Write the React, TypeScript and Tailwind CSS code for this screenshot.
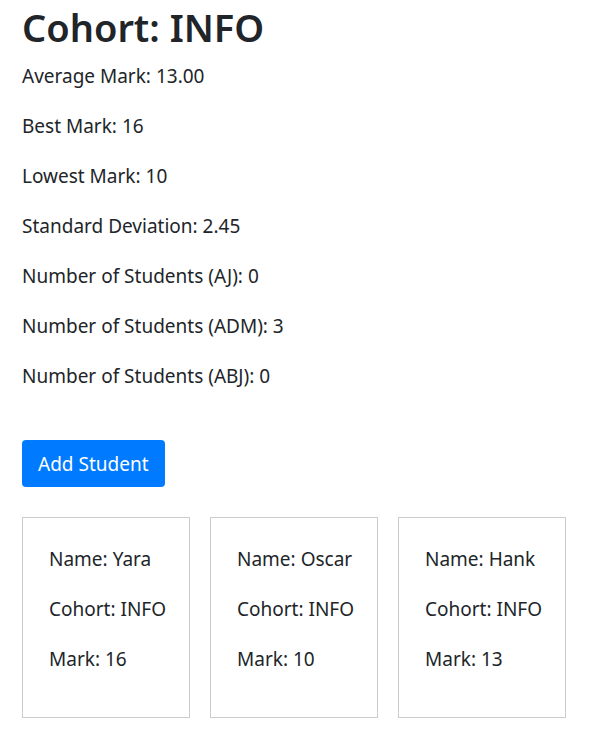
import React from "react";

const stats = [
  "Average Mark: 13.00",
  "Best Mark: 16",
  "Lowest Mark: 10",
  "Standard Deviation: 2.45",
  "Number of Students (AJ): 0",
  "Number of Students (ADM): 3",
  "Number of Students (ABJ): 0",
];

const students = [
  { name: "Yara", mark: 16 },
  { name: "Oscar", mark: 10 },
  { name: "Hank", mark: 13 },
];

export default function App() {
  return (
    <div
      className="bg-white text-[#212529] px-[22px] pt-[1px] min-h-[747px]"
      style={{ fontFamily: '"Segoe UI", "Noto Sans", "Open Sans", sans-serif' }}
    >
      <h1 className="text-[38px] font-semibold leading-[52px] mb-[8px]">Cohort: INFO</h1>
      <div className="flex flex-col gap-[20px] text-[19px] leading-[30px]">
        {stats.map((s) => (
          <p key={s}>{s}</p>
        ))}
      </div>
      <button className="mt-[49px] h-[47px] px-[16px] rounded-[4px] bg-[#007bff] text-white text-[19px] leading-[30px]">
        Add Student
      </button>
      <div className="mt-[30px] flex gap-[20px]">
        {students.map((st) => (
          <div
            key={st.name}
            className="w-[168px] h-[201px] border border-[#cccccc] pl-[26px] pt-[26px] flex flex-col gap-[20px] text-[19px] leading-[30px]"
          >
            <p>Name: {st.name}</p>
            <p>Cohort: INFO</p>
            <p>Mark: {st.mark}</p>
          </div>
        ))}
      </div>
    </div>
  );
}
